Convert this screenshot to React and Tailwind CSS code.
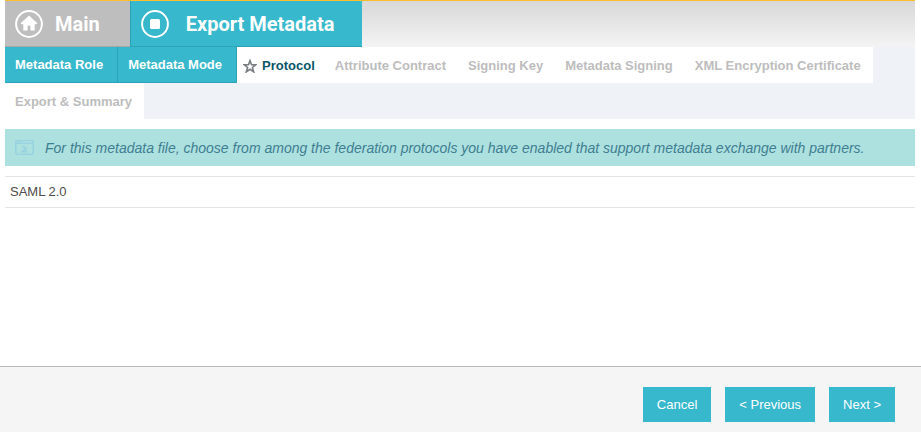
const crumbs = [
  { label: 'Main', icon: HomeIcon, active: false },
  { label: 'Export Metadata', icon: StopIcon, active: true },
]

const steps = [
  { label: 'Metadata Role', state: 'done' },
  { label: 'Metadata Mode', state: 'done' },
  { label: 'Protocol', state: 'current' },
  { label: 'Attribute Contract', state: 'todo' },
  { label: 'Signing Key', state: 'todo' },
  { label: 'Metadata Signing', state: 'todo' },
  { label: 'XML Encryption Certificate', state: 'todo' },
  { label: 'Export & Summary', state: 'todo' },
]

const stepStyles = {
  done: 'bg-[#37b8cc] text-white pl-[10px] pr-[14px] border-r border-b border-[#2aa3b6]',
  current: 'bg-white text-[#0a5568] pt-[2px] pl-[6px] pr-[10px]',
  todo: 'bg-white text-[#bdbdbd] pt-[2px] pl-[10px] pr-[12px]',
}

function HomeIcon() {
  return (
    <svg className="w-7 h-7 shrink-0" viewBox="0 0 28 28" fill="none" aria-hidden="true">
      <circle cx="14" cy="14" r="12.9" stroke="#fff" strokeWidth="2" />
      <path d="M14 5.5L5.6 13.3l.9 1h1.800V20.500h4.300v-4.700h2.800v4.700h4.300v-6.200h1.800l.9-1z" fill="#fff" />
    </svg>
  )
}

function StopIcon() {
  return (
    <svg className="w-7 h-7 shrink-0" viewBox="0 0 28 28" fill="none" aria-hidden="true">
      <circle cx="14" cy="14" r="12.9" stroke="#fff" strokeWidth="2" />
      <rect x="9" y="9" width="10" height="10" rx="1.5" fill="#fff" />
    </svg>
  )
}

function StarIcon() {
  return (
    <svg className="w-[14px] h-[14px] mr-[5px] shrink-0" viewBox="0 0 14 14" fill="none" aria-hidden="true">
      <path d="M7 1.600l1.500 4.200H12.600L9.400 8.500l1.300 4.400L7 10.300l-3.700 2.600 1.300-4.400L1.400 5.800h4.100z" stroke="#797e81" strokeWidth="1.600" />
    </svg>
  )
}

function ConsoleIcon() {
  return (
    <svg className="w-[19px] h-[15px] shrink-0" viewBox="0 0 19 15" fill="none" aria-hidden="true">
      <rect x="0.8" y="0.8" width="17.4" height="13.4" rx="1" stroke="#98d3e0" strokeWidth="1.6" />
      <path d="M1 2.500h17" stroke="#98d3e0" strokeWidth="3" />
      <path d="M2 2h1M4 2h1M6.500 2H17" stroke="#b9e2e8" />
      <path d="M7.500 6l3.500 2.800-3.500 2.800H12" stroke="#98d3e0" strokeWidth="2" />
    </svg>
  )
}

function ActionButton({ children }) {
  return (
    <button type="button" className="h-[35px] px-[14px] bg-[#37b8cc] text-white text-[13px]">
      {children}
    </button>
  )
}

export default function App() {
  return (
    <div className="min-h-screen flex flex-col bg-white font-['Liberation_Sans',Arial,sans-serif]">
      <div className="pl-[5px] pr-[6px]">
        {/* Breadcrumb bar */}
        <header className="flex border-t border-[#fdbf2d] bg-linear-to-b from-[#d8d8d8] to-[#f4f4f4]">
          {crumbs.map(({ label, icon: Icon, active }) => (
            <a
              key={label}
              href="#"
              className={`flex items-center h-[46px] pl-[10px] font-['Roboto',sans-serif] text-xl font-bold text-white border-b ${
                active ? 'gap-[17px] pr-[28px] bg-[#37b8cc] border-l border-[#2aa3b6]' : 'gap-3 pr-[30px] bg-[#bebebe] border-[#a6a6a6]'
              }`}
            >
              <Icon />
              {label}
            </a>
          ))}
        </header>

        {/* Wizard steps */}
        <nav className="flex flex-wrap bg-[#eff3f8]">
          {steps.map(({ label, state }) => (
            <a
              key={label}
              href="#"
              aria-current={state === 'current' ? 'step' : undefined}
              className={`flex items-center h-9 text-[13px] font-bold whitespace-nowrap ${stepStyles[state]}`}
            >
              {state === 'current' && <StarIcon />}
              {label}
            </a>
          ))}
        </nav>

        <main>
          <p className="flex items-center gap-[11px] min-h-[37px] mt-[10px] px-[10px] bg-[#ade1e0] text-[#3f7e90] text-sm italic">
            <ConsoleIcon />
            For this metadata file, choose from among the federation protocols you have enabled that support metadata exchange with partners.
          </p>
          <ul className="mt-[10px] border-y border-[#e5e5e5] text-[13px] leading-5 text-[#4d4d4d]">
            <li className="p-[5px]">SAML 2.0</li>
          </ul>
        </main>
      </div>

      <footer className="mt-auto flex justify-end gap-[14px] pt-5 pb-[10px] pr-[26px] border-t border-[#b8b8b8] bg-[#f5f5f5]">
        <ActionButton>Cancel</ActionButton>
        <ActionButton>&lt; Previous</ActionButton>
        <ActionButton>Next &gt;</ActionButton>
      </footer>
    </div>
  )
}
